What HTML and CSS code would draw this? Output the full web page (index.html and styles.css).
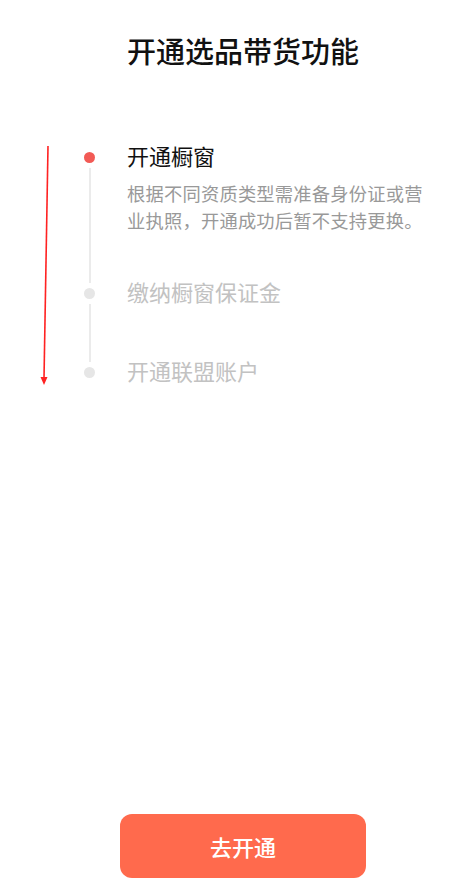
FILE: index.html
```html
<!DOCTYPE html>
<html lang="zh">
<head>
<meta charset="utf-8">
<title>开通选品带货功能</title>
<link rel="stylesheet" href="styles.css">
</head>
<body>
<div class="page">
  <h1 class="title">开通选品带货功能</h1>
  <ol class="steps">
    <li class="step active">
      <div class="rail"><span class="dot"></span><span class="line"></span></div>
      <div class="content">
        <div class="step-title">开通橱窗</div>
        <p class="step-desc">根据不同资质类型需准备身份证或营业执照，开通成功后暂不支持更换。</p>
      </div>
    </li>
    <li class="step">
      <div class="rail"><span class="dot"></span><span class="line"></span></div>
      <div class="content">
        <div class="step-title">缴纳橱窗保证金</div>
      </div>
    </li>
    <li class="step last">
      <div class="rail"><span class="dot"></span></div>
      <div class="content">
        <div class="step-title">开通联盟账户</div>
      </div>
    </li>
  </ol>
  <div class="footer">
    <button class="btn">去开通</button>
  </div>
  <svg class="annotation" width="60" height="400" viewBox="0 0 60 400">
    <line x1="48" y1="146" x2="44" y2="379" stroke="#f22" stroke-width="1.6"/>
    <polygon points="40.5,377 47.5,377 44,385" fill="#f22"/>
  </svg>
</div>
</body>
</html>
```

FILE: styles.css
```css
* { box-sizing: border-box; }
html, body {
  margin: 0;
  padding: 0;
  background: #fff;
}
body {
  font-family: "Noto Sans CJK SC", "Noto Sans", sans-serif;
  color: #111;
}
.page {
  position: relative;
  width: 467px;
  min-height: 896px;
  display: flex;
  flex-direction: column;
}
.title {
  margin: 0;
  padding: 30px 0 0 19px;
  font-size: 29px;
  line-height: 40px;
  font-weight: 500;
  text-align: center;
  color: #111;
}
.steps {
  list-style: none;
  margin: 72px 0 0;
  padding: 0 20px 0 84px;
}
.step {
  display: flex;
  align-items: stretch;
}
.rail {
  width: 11px;
  flex: none;
  display: flex;
  flex-direction: column;
  align-items: center;
}
.dot {
  width: 11px;
  height: 11px;
  border-radius: 50%;
  background: #e6e6e6;
  margin-top: 10px;
  flex: none;
}
.active .dot { background: #f25a55; }
.line {
  flex: 1;
  width: 2px;
  background: #ebebeb;
  margin-top: 5px;
  margin-bottom: -5px;
}
.content {
  margin-left: 32px;
  padding-bottom: 52.5px;
}
.active .content { padding-bottom: 44.5px; }
.last .content { padding-bottom: 0; }
.step-title {
  font-size: 22px;
  line-height: 26px;
  color: #c2c2c2;
}
.active .step-title { color: #111; }
.step-desc {
  margin: 11.5px 0 0;
  font-size: 18.3px;
  line-height: 27px;
  color: #999;
  width: 300px;
  letter-spacing: 0.2px;
}
.footer {
  margin-top: auto;
  padding: 0 0 18px 19px;
  display: flex;
  justify-content: center;
}
.btn {
  width: 246px;
  height: 64px;
  border: none;
  border-radius: 12px;
  background: #ff6a4d;
  color: #fff;
  font-family: "Noto Sans CJK SC", "Noto Sans", sans-serif;
  font-size: 22px;
  font-weight: 500;
}
.annotation {
  position: absolute;
  left: 0;
  top: 0;
}
```
